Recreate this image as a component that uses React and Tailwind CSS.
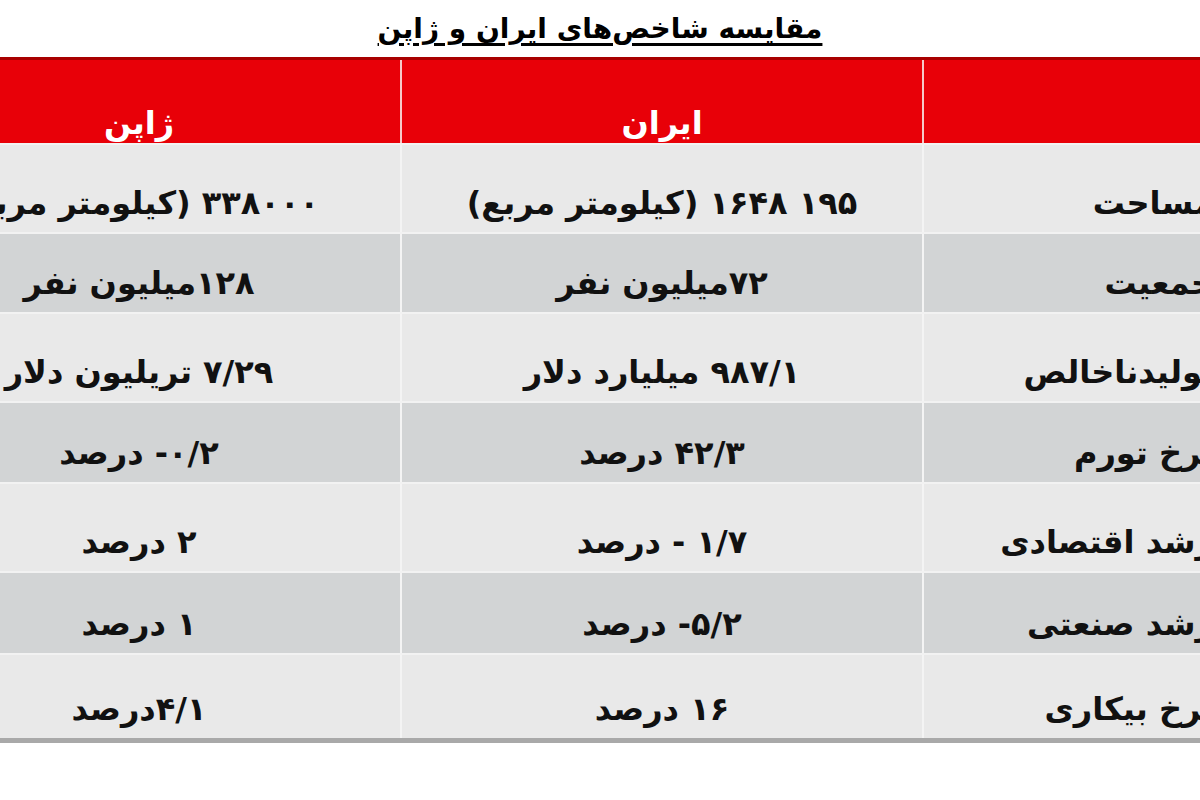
const rows = [
  { label: 'مساحت', iran: <>
      <bdo dir="ltr">۱۶۴۸ ۱۹۵</bdo> (کیلومتر مربع)
    </>, japan: '۳۳۸۰۰۰ (کیلومتر مربع)', h: 'h-[89px]', shade: 'bg-[#e9e9e9]' },
  { label: 'جمعیت', iran: '۷۲میلیون نفر', japan: '۱۲۸میلیون نفر', h: 'h-[80px]', shade: 'bg-[#d2d4d5]' },
  { label: 'تولیدناخالص', iran: '۹۸۷/۱ میلیارد دلار', japan: '۷/۲۹ تریلیون دلار', h: 'h-[89px]', shade: 'bg-[#e9e9e9]' },
  { label: 'نرخ تورم', iran: '۴۲/۳ درصد', japan: '۰/۲- درصد', h: 'h-[81px]', shade: 'bg-[#d2d4d5]' },
  { label: 'رشد اقتصادی', iran: '۱/۷ - درصد', japan: '۲ درصد', h: 'h-[89px]', shade: 'bg-[#e9e9e9]' },
  { label: 'رشد صنعتی', iran: '۵/۲- درصد', japan: '۱ درصد', h: 'h-[82px]', shade: 'bg-[#d2d4d5]' },
  { label: 'نرخ بیکاری', iran: '۱۶ درصد', japan: '۴/۱درصد', h: 'h-[85px]', shade: 'bg-[#e9e9e9]' },
]

export default function App() {
  return (
    <div
      dir="rtl"
      className="w-[1200px] h-[800px] overflow-hidden bg-white text-black font-['DejaVu_Sans',sans-serif]"
    >
      <div className="h-[57px] flex justify-center pt-[11px]">
        <h1 className="text-[28px] font-bold leading-[36px] underline underline-offset-[5px] decoration-[3px]">
          مقایسه شاخص‌های ایران و ژاپن
        </h1>
      </div>

      <div className="w-[1354px] mr-[-32px]">
        {/* header */}
        <div className="grid grid-cols-[310px_522px_522px] h-[86px] bg-[#e80008] border-t-[3px] border-[#a80000] text-white text-[32px] font-bold leading-none">
          <div className="border-l-2 border-[#f6c9c9]" />
          <div className="border-l-2 border-[#f6c9c9] flex items-end justify-center pb-[4px]">ایران</div>
          <div className="flex items-end justify-center pb-[4px]">ژاپن</div>
        </div>

        {rows.map((row, i) => (
          <div
            key={i}
            className={`grid grid-cols-[310px_522px_522px] ${row.h} ${row.shade} border-t-2 border-[#f2f2f2] text-[32px] font-bold leading-none text-[#111]`}
          >
            <div className="border-l-2 border-[#f4f4f4] flex items-end justify-start pr-[18px] pb-[13px] whitespace-nowrap">
              {row.label}
            </div>
            <div className="border-l-2 border-[#f4f4f4] flex items-end justify-center pb-[13px] whitespace-nowrap">
              <span>{row.iran}</span>
            </div>
            <div className="flex items-end justify-center pb-[13px] whitespace-nowrap">
              <span>{row.japan}</span>
            </div>
          </div>
        ))}
        <div className="h-[5px] bg-[#a9a9a9]" />
      </div>
    </div>
  )
}
